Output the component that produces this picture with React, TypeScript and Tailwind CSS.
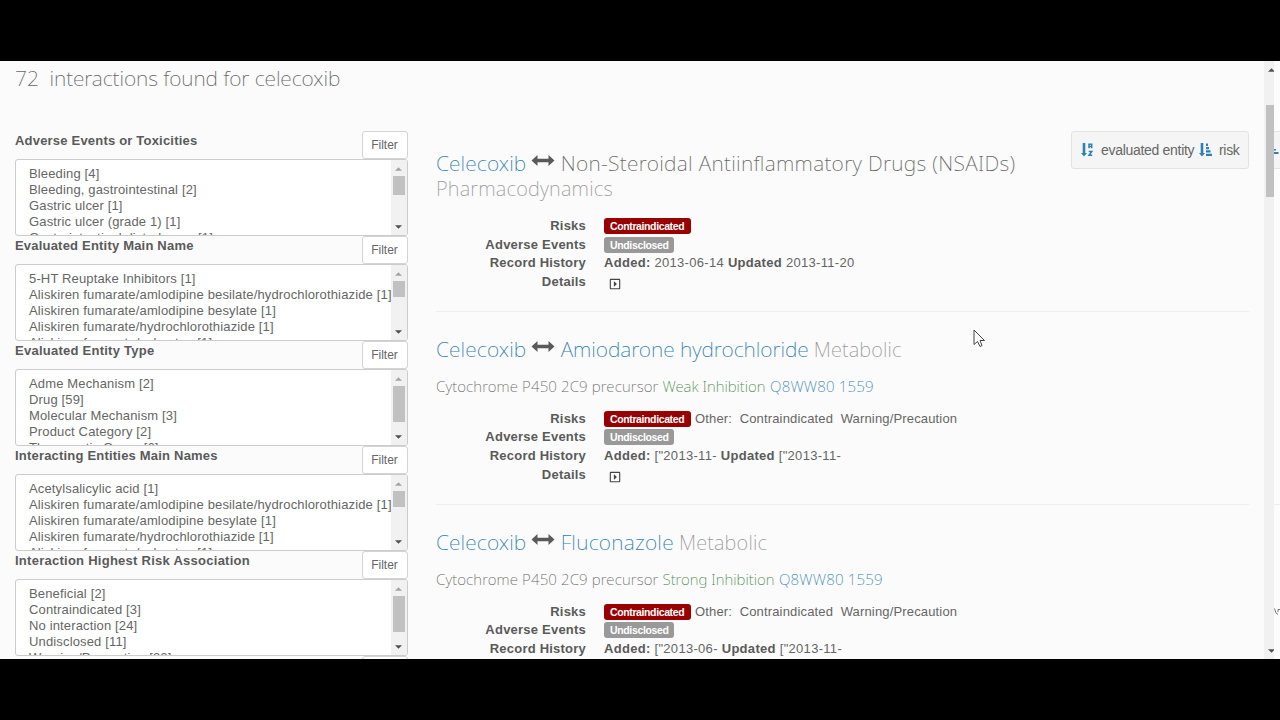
import React from 'react';
import { clsx } from 'clsx';
import { FaRegCaretSquareRight } from 'react-icons/fa';

interface FacetProps {
  title: string;
  titleClass: string;
  thumbClass: string;
  options: string[];
}

interface InteractionProps {
  target: string;
  targetClass: string;
  linked?: boolean;
  kind: string;
  kindClass: string;
  effect?: string;
  added: string;
  updated: string;
  other?: boolean;
}

const facets: FacetProps[] = [
  {
    title: 'Adverse Events or Toxicities',
    titleClass: 'tracking-[0.2px]',
    thumbClass: 'h-[19px]',
    options: ['Bleeding [4]', 'Bleeding, gastrointestinal [2]', 'Gastric ulcer [1]', 'Gastric ulcer (grade 1) [1]', 'Gastrointestinal disturbance [1]'],
  },
  {
    title: 'Evaluated Entity Main Name',
    titleClass: 'tracking-[0.2px]',
    thumbClass: 'h-[16px]',
    options: [
      '5-HT Reuptake Inhibitors [1]',
      'Aliskiren fumarate/amlodipine besilate/hydrochlorothiazide [1]',
      'Aliskiren fumarate/amlodipine besylate [1]',
      'Aliskiren fumarate/hydrochlorothiazide [1]',
      'Aliskiren fumarate/valsartan [1]',
    ],
  },
  {
    title: 'Evaluated Entity Type',
    titleClass: 'tracking-[0.25px]',
    thumbClass: 'h-[36px]',
    options: ['Adme Mechanism [2]', 'Drug [59]', 'Molecular Mechanism [3]', 'Product Category [2]', 'Therapeutic Group [6]'],
  },
  {
    title: 'Interacting Entities Main Names',
    titleClass: 'tracking-[0.2px]',
    thumbClass: 'h-[16px]',
    options: [
      'Acetylsalicylic acid [1]',
      'Aliskiren fumarate/amlodipine besilate/hydrochlorothiazide [1]',
      'Aliskiren fumarate/amlodipine besylate [1]',
      'Aliskiren fumarate/hydrochlorothiazide [1]',
      'Aliskiren fumarate/valsartan [1]',
    ],
  },
  {
    title: 'Interaction Highest Risk Association',
    titleClass: 'tracking-[0.26px]',
    thumbClass: 'h-[36px]',
    options: ['Beneficial [2]', 'Contraindicated [3]', 'No interaction [24]', 'Undisclosed [11]', 'Warning/Precaution [32]'],
  },
];

const Triangle: React.FC<{ up?: boolean; className?: string }> = ({ up, className }) => (
  <svg viewBox="0 0 8 4" className={clsx('h-1 w-[7px] shrink-0', className)} fill="currentColor">
    <path d={up ? 'M0 4L4 0L8 4Z' : 'M0 0H8L4 4Z'} />
  </svg>
);

const ArrowH: React.FC = () => (
  <svg viewBox="0 0 24 14" className="mx-[5.2px] mt-1 h-[14px] w-6 shrink-0 self-start" fill="#5a5a5a">
    <path d="M0.5 6.5L6.5 1V4.8H17.5V1L23.5 6.5L17.5 12V8.2H6.5V12Z" />
  </svg>
);

const SortAlpha: React.FC = () => (
  <svg viewBox="0 0 13 14" className="h-[14px] w-[13px] shrink-0 text-[#2f80b3]" fill="none" stroke="currentColor">
    <path d="M1.7 0H4.3V10H6L3 13.5L0 10H1.7Z" fill="currentColor" stroke="none" />
    <path d="M8 5.2V1.2H10.7V5.2M8 3.4H11M7.7 8.5H10.8L8 12.3H11.2" strokeWidth="1.5" />
  </svg>
);

const SortAmount: React.FC = () => (
  <svg viewBox="0 0 13 14" className="h-[14px] w-[13px] shrink-0 text-[#2f80b3]" fill="currentColor">
    <path d="M1.7 0H4.3V10H6L3 13.5L0 10H1.7ZM7 0.5H9V3H7ZM7 4H10V6.3H7ZM7 7.3H11.5V9.6H7ZM7 10.7H13V13H7Z" />
  </svg>
);

const Facet: React.FC<FacetProps> = ({ title, titleClass, thumbClass, options }) => (
  <section className="h-[105px] shrink-0">
    <div className="flex h-7 items-start justify-between">
      <h4 className={clsx('pt-0.5 text-[13px] leading-4 font-bold text-[#5a5a5a]', titleClass)}>{title}</h4>
      <button type="button" className="h-7 w-[46px] rounded-[3px] border border-[#d4d4d4] bg-white text-[12px] text-[#666]">
        Filter
      </button>
    </div>
    <div className="flex h-[77px] overflow-hidden rounded-[3px] border border-[#ccc] bg-white">
      <ul className="min-w-0 flex-1 overflow-hidden pt-[6px] pl-[13px] text-[13px] leading-4 tracking-[0.15px] whitespace-nowrap text-[#666]">
        {options.map((option) => (
          <li key={option}>{option}</li>
        ))}
      </ul>
      <div className="flex w-4 flex-col items-center bg-[#f1f1f1] pt-[7px] pb-[6px]">
        <Triangle up className="text-[#a3a3a3]" />
        <div className={clsx('mt-[5px] w-3 bg-[#c1c1c1]', thumbClass)} />
        <Triangle className="mt-auto text-[#505050]" />
      </div>
    </div>
  </section>
);

const Term: React.FC<{ children: React.ReactNode }> = ({ children }) => (
  <dt className="text-right font-bold tracking-[0.22px] text-[#5a5a5a]">{children}</dt>
);

const Interaction: React.FC<InteractionProps> = ({
  target,
  targetClass,
  linked = true,
  kind,
  kindClass,
  effect,
  added,
  updated,
  other = true,
}) => (
  <article className="border-b border-[#eee] pt-6 pb-5">
    <h3 className="flex flex-wrap items-baseline font-['Noto_Sans'] text-[21px] leading-[26px] font-extralight whitespace-nowrap text-[#666]">
      <a className="tracking-[0.1px] text-[#2f80b3]">Celecoxib</a>
      <ArrowH />
      <span className={clsx(linked && 'text-[#2f80b3]', targetClass)}>{target}</span>
      <small className={clsx('text-[20px] text-[#999]', linked ? 'ml-[5px]' : 'w-full', kindClass)}>{kind}</small>
    </h3>
    {effect ? (
      <h4 className="mt-[13px] mb-[13px] flex gap-1 font-['Noto_Sans'] text-[15px] leading-5 font-extralight tracking-[0.13px] whitespace-nowrap text-[#666]">
        <span>Cytochrome P450 2C9 precursor</span>
        <span className="tracking-[0.03px] text-[#468847]">{effect}</span>
        <a className="ml-[0.5px] tracking-[0.2px] text-[#2f80b3]">Q8WW80 1559</a>
      </h4>
    ) : (
      <div className="h-[14px]" />
    )}
    <dl className="grid grid-cols-[150px_1fr] auto-rows-[18.7px] gap-x-[18px] text-[13px] leading-[19px] text-[#666]">
      <Term>Risks</Term>
      <dd className="flex items-start tracking-[0.16px] whitespace-pre">
        <span className="mt-[2px] h-4 w-[87px] rounded-[3px] bg-[#990000] pl-[6px] text-[10.5px] leading-4 font-bold tracking-[-0.38px] text-white">Contraindicated</span>
        {other && <span className="ml-1">Other:  Contraindicated  Warning/Precaution</span>}
      </dd>
      <Term>Adverse Events</Term>
      <dd className="flex items-start">
        <span className="mt-[2px] h-4 w-[69.5px] rounded-[3px] bg-[#999] pl-[6px] text-[10.5px] leading-4 font-bold tracking-[-0.35px] text-white">Undisclosed</span>
      </dd>
      <Term>Record History</Term>
      <dd className="tracking-[0.3px]">
        <b className="text-[#5a5a5a]">Added:</b> {added} <b className="text-[#5a5a5a]">Updated</b> {updated}
      </dd>
      <Term>Details</Term>
      <dd className="pt-[6px] pl-[5px]">
        <FaRegCaretSquareRight className="h-3 w-3 text-[#444]" />
      </dd>
    </dl>
  </article>
);

export default function App() {
  return (
    <div className="h-[720px] w-[1280px] overflow-hidden bg-black pt-[61px] font-['Liberation_Sans',sans-serif]">
      <div className="relative flex h-[598px] overflow-hidden bg-[#fbfbfb]">
        <div className="w-[1264px] overflow-hidden pl-[15px]">
          <h2 className="h-[70px] pt-[3px] font-['Noto_Sans'] text-[21px] leading-7 font-extralight tracking-[-0.08px] whitespace-pre text-[#666]">72  interactions found for celecoxib</h2>
          <div className="flex">
            <aside className="flex w-[392.5px] flex-col">
              {facets.map((facet) => (
                <Facet key={facet.title} {...facet} />
              ))}
              <div className="flex justify-end">
                <div className="h-7 w-[46px] rounded-[3px] border border-[#d4d4d4] bg-white" />
              </div>
            </aside>
            <main className="-mt-[5px] ml-[28.5px] w-[813px]">
              <Interaction
                target="Non-Steroidal Antiinflammatory Drugs (NSAIDs)"
                targetClass="tracking-[0.32px]"
                linked={false}
                kind="Pharmacodynamics"
                kindClass="tracking-[0.22px]"
                added="2013-06-14"
                updated="2013-11-20"
                other={false}
              />
              <Interaction target="Amiodarone hydrochloride" targetClass="tracking-[-0.03px]" kind="Metabolic" kindClass="tracking-[0.15px]" effect="Weak Inhibition" added={'["2013-11-'} updated={'["2013-11-'} />
              <Interaction target="Fluconazole" targetClass="tracking-[0.26px]" kind="Metabolic" kindClass="tracking-[0.2px]" effect="Strong Inhibition" added={'["2013-06-'} updated={'["2013-11-'} />
            </main>
          </div>
        </div>
        <div className="flex w-2.5 flex-col items-end bg-[#f1f1f1] pt-[7px] pb-[6px]">
          <Triangle up className="-mr-px text-[#505050]" />
          <div className="mt-[33px] h-[92px] w-2 bg-[#c1c1c1]" />
          <Triangle className="mt-auto -mr-px text-[#505050]" />
        </div>
        {/* Sliver of the page past the scrollbar */}
        <div className="w-1.5 overflow-hidden bg-[#fcfcfc] pt-[70px]">
          <div className="flex h-[38px] items-center border-y border-[#e5e5e5] bg-[#f5f5f5]">
            <svg viewBox="0 0 6 6" className="mt-1 h-1.5 w-1.5" fill="#2f80b3">
              <path d="M0 0H2V1.5H0ZM0 3H4.5V5H0Z" />
            </svg>
          </div>
          <div className="mt-[335px] h-px bg-[#eee]" />
          <svg viewBox="0 0 6 8" className="mt-[103px] h-2 w-1.5" fill="none" stroke="#777">
            <path d="M0.5 0.5L2 5L4 6.5M4 1.5H6M4 1.5V4" />
          </svg>
        </div>

        <div className="absolute top-[70px] right-[31px] flex h-[38px] w-[178px] items-center rounded-[3px] border border-[#e3e3e3] bg-[#f5f5f5] pl-[9px] text-[14px] tracking-[-0.3px] whitespace-nowrap text-[#666]">
          <SortAlpha />
          <span className="ml-[7px] w-[98px]">evaluated entity</span>
          <SortAmount />
          <span className="ml-[7px]">risk</span>
        </div>
        <svg viewBox="0 0 12 19" className="absolute top-[268px] left-[973px] h-[19px] w-3" fill="#fff" stroke="#444" strokeWidth="1">
          <path d="M1 1V15.5L4.5 12.5L7 17.5L9 16.5L7 11.5H11.5Z" />
        </svg>
      </div>
    </div>
  );
}
